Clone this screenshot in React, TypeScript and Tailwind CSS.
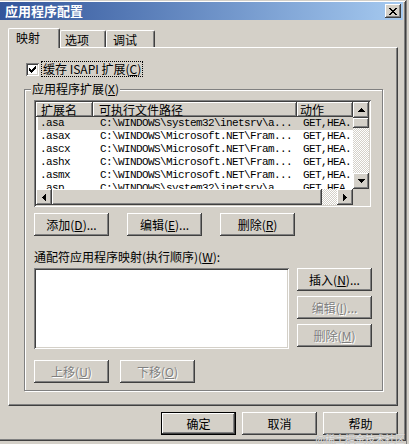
import React from "react";

const RAISED = "shadow-[inset_-1px_-1px_#404040,inset_1px_1px_#fff,inset_-2px_-2px_#808080]";
const SUNKEN = "shadow-[inset_1px_1px_#808080,inset_-1px_-1px_#fff,inset_2px_2px_#404040,inset_-2px_-2px_#d4d0c8]";
const CHECKER = "bg-[conic-gradient(#fff_25%,#d4d0c8_0_50%,#fff_0_75%,#d4d0c8_0)] bg-[length:2px_2px]";
const MONO = "font-['Liberation_Mono','DejaVu_Sans_Mono',monospace] text-[11px] tracking-[-0.6px]";

function U({ c }: { c: string }) {
  return <span className="underline underline-offset-[1px]">{c}</span>;
}

function Btn({
  children,
  disabled,
  isDefault,
}: {
  children: React.ReactNode;
  disabled?: boolean;
  isDefault?: boolean;
}) {
  return (
    <button
      type="button"
      className={`w-[75px] h-[23px] flex items-center justify-center bg-[#d4d0c8] text-[12px] leading-[14px] ${
        isDefault ? "border border-black " + RAISED : RAISED
      } ${disabled ? "text-[#808080] [text-shadow:1px_1px_0_#fff]" : "text-black"}`}
    >
      {children}
    </button>
  );
}

const ARROWS: Record<string, { w: number; h: number; d: string }> = {
  up: { w: 7, h: 4, d: "M3 0h1v1h1v1h1v1h1v1H0V3h1V2h1V1h1Z" },
  down: { w: 7, h: 4, d: "M0 0h7v1H6v1H5v1H4v1H3V3H2V2H1V1H0Z" },
  left: { w: 4, h: 7, d: "M3 0h1v7H3V6H2V5H1V4H0V3h1V2h1V1h1Z" },
  right: { w: 4, h: 7, d: "M0 0h1v1h1v1h1v1h1v1H3v1H2v1H1v1H0Z" },
};

function ArrowBtn({ dir }: { dir: "up" | "down" | "left" | "right" }) {
  const a = ARROWS[dir];
  return (
    <div className={`w-[16px] h-[16px] shrink-0 bg-[#d4d0c8] flex items-center justify-center ${RAISED}`}>
      <svg width={a.w} height={a.h} viewBox={`0 0 ${a.w} ${a.h}`} shapeRendering="crispEdges">
        <path d={a.d} fill="#000" />
      </svg>
    </div>
  );
}

const ROWS: [string, string, string][] = [
  [".asa", "C:\\WINDOWS\\system32\\inetsrv\\a...", "GET,HEA..."],
  [".asax", "C:\\WINDOWS\\Microsoft.NET\\Fram...", "GET,HEA..."],
  [".ascx", "C:\\WINDOWS\\Microsoft.NET\\Fram...", "GET,HEA..."],
  [".ashx", "C:\\WINDOWS\\Microsoft.NET\\Fram...", "GET,HEA..."],
  [".asmx", "C:\\WINDOWS\\Microsoft.NET\\Fram...", "GET,HEA..."],
  [".asp", "C:\\WINDOWS\\system32\\inetsrv\\a...", "GET,HEA..."],
];

function CloseGlyph() {
  const rows = [
    [0, 2, 6, 2],
    [1, 2, 5, 2],
    [2, 4],
    [3, 2],
    [2, 4],
    [1, 2, 5, 2],
    [0, 2, 6, 2],
  ];
  return (
    <svg width="8" height="7" viewBox="0 0 8 7" shapeRendering="crispEdges">
      {rows.map((r, y) => (
        <React.Fragment key={y}>
          <rect x={r[0]} y={y} width={r[1]} height={1} fill="#000" />
          {r.length > 2 && <rect x={r[2]} y={y} width={r[3]} height={1} fill="#000" />}
        </React.Fragment>
      ))}
    </svg>
  );
}

function CheckGlyph() {
  const rows: [number, number][] = [
    [6, 1],
    [5, 2],
    [4, 3],
    [3, 3],
    [0, 5],
    [1, 3],
    [2, 1],
  ];
  return (
    <svg width="7" height="7" viewBox="0 0 7 7" shapeRendering="crispEdges">
      {rows.map(([x, w], y) => (
        <rect key={y} x={x} y={y} width={w} height={1} fill="#000" />
      ))}
      <rect x={0} y={2} width={1} height={3} fill="#000" />
      <rect x={1} y={3} width={1} height={1} fill="#000" />
    </svg>
  );
}

export default function App() {
  return (
    <div className="relative w-[409px] h-[444px] overflow-hidden flex bg-[#d4d0c8] text-black font-['Noto_Sans_CJK_SC','Noto_Sans',sans-serif] text-[12px]">
      {/* dialog */}
      <div className="w-[406px] h-[441px] shrink-0 flex flex-col pt-[2px] bg-[#d4d0c8] shadow-[inset_0_1px_#d4d0c8,inset_-1px_-1px_#404040,inset_0_2px_#fff,inset_-2px_-2px_#808080]">
        {/* title bar */}
        <div className="h-[18px] mr-[3px] flex items-center justify-between pl-[5px] pr-[2px] bg-linear-to-r from-[#33559a] to-[#a6caf0]">
          <span className="text-white font-bold text-[13px] leading-[18px]">应用程序配置</span>
          <div className={`w-[16px] h-[14px] bg-[#d4d0c8] flex items-center justify-center ${RAISED}`}>
            <CloseGlyph />
          </div>
        </div>

        {/* body */}
        <div className="flex flex-col pl-[8px] pt-[8px]">
          {/* tabs */}
          <div className="relative z-10 flex items-end h-[19px]">
            <div className="w-[52px] h-[20px] mb-[-1px] pt-[2px] pl-[7px] bg-[#d4d0c8] border-l border-t border-white border-r border-r-[#404040] shadow-[inset_-1px_0_#808080] rounded-t-[2px] leading-[14px]">
              映射
            </div>
            <div className="w-[46px] h-[17px] pt-[2px] pl-[4px] bg-[#d4d0c8] border-l border-t border-white border-r border-r-[#404040] shadow-[inset_-1px_0_#808080] rounded-t-[2px] leading-[14px]">
              选项
            </div>
            <div className="w-[49px] h-[17px] pt-[2px] pl-[6px] bg-[#d4d0c8] border-l border-t border-white border-r border-r-[#404040] shadow-[inset_-1px_0_#808080] rounded-t-[2px] leading-[14px]">
              调试
            </div>
          </div>

          {/* tab panel */}
          <div className="w-[390px] h-[359px] flex flex-col pt-[13px] pl-[15px] border-t border-l border-white border-r border-b border-r-[#404040] border-b-[#404040] shadow-[inset_-1px_-1px_#808080]">
            {/* checkbox */}
            <div className="flex items-center h-[16px] ml-[2px]">
              <div className={`w-[13px] h-[13px] bg-white flex items-center justify-center ${SUNKEN}`}>
                <CheckGlyph />
              </div>
              <div className="ml-[2px] h-[16px] px-[1px] border border-dotted border-black leading-[14px] whitespace-nowrap">
                缓存 ISAPI 扩展(<U c="C" />)
              </div>
            </div>

            {/* group box */}
            <div className="mt-[12px] w-[359px] flex flex-col px-[9px] pb-[7px] border border-[#808080] shadow-[inset_1px_1px_#fff,1px_1px_#fff]">
              <div className="-mt-[8px] -ml-[3px] w-fit px-[1px] bg-[#d4d0c8] leading-[14px]">
                应用程序扩展(<U c="X" />)
              </div>

              {/* list view */}
              <div className={`mt-[4px] w-[337px] h-[107px] p-[2px] ${SUNKEN}`}>
                <div className="w-full h-full grid grid-cols-[317px_16px] grid-rows-[87px_16px] bg-white">
                  <div className="overflow-hidden flex flex-col">
                    <div className="flex h-[15px] shrink-0">
                      <div className={`w-[57px] pl-[5px] leading-[15px] whitespace-nowrap bg-[#d4d0c8] ${RAISED}`}>扩展名</div>
                      <div className={`w-[204px] pl-[6px] leading-[15px] whitespace-nowrap bg-[#d4d0c8] ${RAISED}`}>可执行文件路径</div>
                      <div className={`w-[56px] pl-[3px] leading-[15px] whitespace-nowrap bg-[#d4d0c8] ${RAISED}`}>动作</div>
                    </div>
                    {ROWS.map(([ext, path, act], i) => (
                      <div
                        key={i}
                        className={`flex h-[13px] shrink-0 ml-[2px] w-[315px] ${MONO} leading-[13px] ${
                          i === 0 ? "bg-[#d4d0c8]" : ""
                        }`}
                      >
                        <div className="w-[55px] pl-[2px] overflow-hidden whitespace-nowrap">{ext}</div>
                        <div className="w-[204px] pl-[7px] overflow-hidden whitespace-nowrap">{path}</div>
                        <div className="w-[56px] pl-[6px] overflow-hidden whitespace-nowrap">{act}</div>
                      </div>
                    ))}
                  </div>
                  {/* vertical scrollbar */}
                  <div className="flex flex-col">
                    <ArrowBtn dir="up" />
                    <div className={`h-[10px] shrink-0 bg-[#d4d0c8] ${RAISED}`} />
                    <div className={`flex-1 ${CHECKER}`} />
                    <ArrowBtn dir="down" />
                  </div>
                  {/* horizontal scrollbar */}
                  <div className="flex">
                    <ArrowBtn dir="left" />
                    <div className={`w-[270px] shrink-0 bg-[#d4d0c8] ${RAISED}`} />
                    <div className={`flex-1 ${CHECKER}`} />
                    <ArrowBtn dir="right" />
                  </div>
                  <div className="bg-[#d4d0c8]" />
                </div>
              </div>

              {/* buttons */}
              <div className="mt-[6px] flex gap-[18px]">
                <Btn>
                  添加(<U c="D" />)...
                </Btn>
                <Btn>
                  编辑(<U c="E" />)...
                </Btn>
                <Btn>
                  删除(<U c="R" />)
                </Btn>
              </div>

              <div className="mt-[14px] leading-[14px] whitespace-nowrap">
                通配符应用程序映射(执行顺序)(<U c="W" />):
              </div>

              <div className="mt-[4px] flex gap-[8px]">
                <div className={`w-[255px] h-[81px] bg-white ${SUNKEN}`} />
                <div className="flex flex-col gap-[5px]">
                  <Btn>
                    插入(<U c="N" />)...
                  </Btn>
                  <Btn disabled>
                    编辑(<U c="I" />)...
                  </Btn>
                  <Btn disabled>
                    删除(<U c="M" />)
                  </Btn>
                </div>
              </div>

              <div className="mt-[11px] flex gap-[11px]">
                <Btn disabled>
                  上移(<U c="U" />)
                </Btn>
                <Btn disabled>
                  下移(<U c="O" />)
                </Btn>
              </div>
            </div>
          </div>

          {/* dialog buttons */}
          <div className="mt-[6px] w-[390px] flex justify-end gap-[6px]">
            <Btn isDefault>确定</Btn>
            <Btn>取消</Btn>
            <Btn>帮助</Btn>
          </div>
        </div>
      </div>

      {/* window behind */}
      <div className="flex-1 h-full border-l border-[#808080] bg-[#d4d0c8]" />

      {/* watermark */}
      <div className="absolute right-[4px] bottom-0 text-[10px] leading-[11px] text-[#e4e4e4] [text-shadow:0_0_1px_#8a8a8a] whitespace-nowrap">
        @稀土掘金技术社区
      </div>
    </div>
  );
}
